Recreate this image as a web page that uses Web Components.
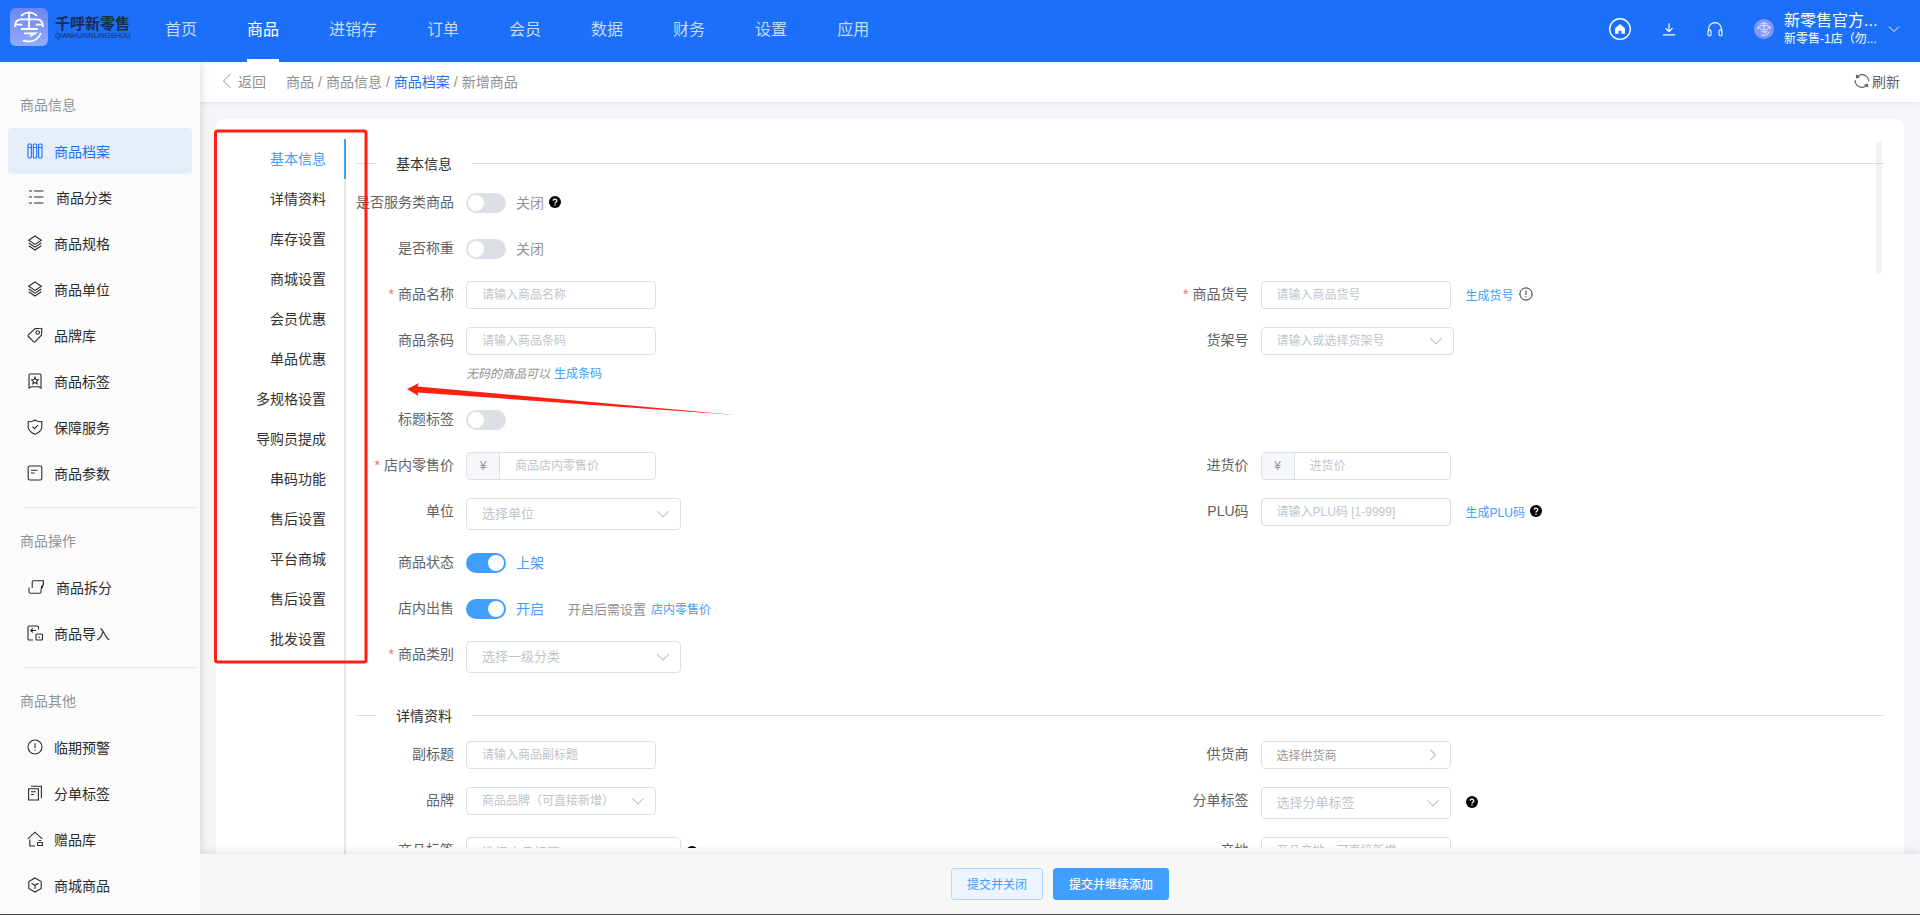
<!DOCTYPE html>
<html lang="zh-CN">
<head>
<meta charset="utf-8">
<title>新增商品</title>
<style>
  html, body { margin: 0; height: 100%; }
  body {
    font-family: "Liberation Sans", "Noto Sans CJK SC", sans-serif;
    font-size: 14px;
    color: #303133;
    background: #f4f6f9;
    overflow: hidden;
  }
</style>
</head>
<body>
<product-app></product-app>

<script>
const define = (name, html, setup) => {
  const tpl = document.createElement('template');
  tpl.innerHTML = html;
  customElements.define(name, class extends HTMLElement {
    connectedCallback() {
      if (this.shadowRoot) return;
      this.attachShadow({ mode: 'open' }).appendChild(tpl.content.cloneNode(true));
      if (setup) setup.call(this, this.shadowRoot);
    }
  });
};

const ICONS = {
  columns: '<rect x="1" y="1" width="3.4" height="14" rx="1"/><rect x="6.3" y="1" width="3.4" height="14" rx="1"/><rect x="11.6" y="1" width="3.4" height="14" rx="1"/><path d="M1 4.5h3.4M6.3 4.5h3.4M11.6 4.5H15"/>',
  list: '<path d="M1 2h3M6 2h9.5M1 8h3M6 8h9.5M1 14h3M6 14h9.5" stroke-width="1.2"/>',
  layers: '<path d="M8 1l6.3 4.2L8 9.4 1.700 5.200z"/><path d="M1.700 8L8 12.200 14.300 8M1.700 10.800L8 15l6.300-4.200"/>',
  tag: '<path d="M8.200 1.600l5.600-.4a1 1 0 0 1 1.100 1.100l-.5 5.900L8.200 14.600a1.200 1.200 0 0 1-1.700 0L1.400 9.500a1.200 1.200 0 0 1 0-1.700z"/><circle cx="10.700" cy="5.500" r="1.800"/>',
  bookmark: '<path d="M2 15V2.200A1.200 1.200 0 0 1 3.200 1h9.600A1.200 1.200 0 0 1 14 2.200V15l-2.200-1.200H4.200z"/><path d="M8 4.300l1 2.200 2.400.3-1.800 1.600.5 2.400L8 9.600l-2.100 1.200.5-2.400-1.800-1.600L7 6.500z"/>',
  shield: '<path d="M8 1l2.300 1.300 4.500.5v5.400c0 3-2.600 5.200-6.800 7-4.200-1.800-6.800-4-6.800-7V2.800l4.500-.5z"/><path d="M5.500 7.600l2 2 3.400-3.400"/>',
  params: '<rect x="1.200" y="1" width="13.600" height="14" rx="1.500"/><path d="M4 5.200h6.500M4 8h3.500"/>',
  split: '<path d="M4.200 9V3.200A1.500 1.500 0 0 1 5.700 1.700H15.400V6M13.600 6.600l-.6 6.200a1.500 1.500 0 0 1-1.500 1.500H2.500A1.500 1.500 0 0 1 1 12.800V8.500M4.200 5v3M15.400 4l-1.200 5"/>',
  importer: '<path d="M11.500 4.500V2.200A1.200 1.200 0 0 0 10.300 1H2.200A1.200 1.200 0 0 0 1 2.200v11.600A1.200 1.200 0 0 0 2.200 15H6"/><path d="M9 5.500H3.800M5.800 3.500l-2 2 2 2"/><rect x="9" y="9" width="6.500" height="6" rx="1"/><path d="M11.500 12.200h1.600"/>',
  alert: '<circle cx="8" cy="8" r="7"/><path d="M8 4.200v4.800M8 10.500v1.300"/>',
  copies: '<path d="M1.600 3.800h9.800V15H1.600zM4 1.200h10.400v12M4 6.800h4.800M4 9.500h2.800"/>',
  gift: '<path d="M2.800 8.500V15H8M.8 7.800L8 1.200l7.200 6.600"/><path d="M10.500 11.500h5M10.500 14.500h5V11.500M10.500 11.500v3M11.700 9.500h2.600"/>',
  cube: '<path d="M8 1l6.200 3.500v7L8 15l-6.200-3.500v-7z"/><path d="M4.500 6.300L8 8.300l3.500-2M8 8.300v3.700"/>',
  home: '<circle cx="8" cy="8" r="7.500" stroke-width="1"/><path d="M8 4.400L11.600 7.500V11.500H9.100V9.200H6.900V11.500H4.400V7.500z" fill="currentColor" stroke="none"/>',
  download: '<path d="M8 1.500v9M4 7l4 4 4-4M1 14.800h14" stroke-width="1.400"/>',
  headset: '<path d="M1.600 10.500V8a6.400 6.400 0 0 1 12.800 0v2.500"/><rect x="1" y="8.800" width="3" height="6" rx="1.400"/><rect x="12" y="8.800" width="3" height="6" rx="1.400"/>',
  down: '<path d="M1.500 4.800L8 11.300l6.500-6.500" stroke-width="1.300"/>',
  left: '<path d="M12 0L4 8 12 16"/>',
  right: '<path d="M5 2l6 6-6 6" stroke-width="1.300"/>',
  refresh: '<path d="M4.800 2.400A6.800 6.800 0 0 1 14.700 8.600M1.300 7.400A6.800 6.800 0 0 0 11.200 13.600"/><path d="M1.800 1.200L2.200 5.600 6.300 4.200zM14.200 14.800l-.4-4.400-4.100 1.400z" fill="currentColor" stroke="none"/><path d="M4.800 2.400L3 4.200M1.300 7.400V9.400M11.200 13.600L13 11.800" />',
  help: '<circle cx="8" cy="8" r="8" fill="#000" stroke="none"/><path d="M5.700 6.400a2.300 2.100 0 1 1 3.700 1.600c-.9.700-1.400.9-1.400 1.900M8 11.300v1.600" stroke="#fff" stroke-width="1.800"/>',
  brand: '<path d="M4 2.400Q8 -1 12 2.400M1 8Q1 4.200 4 4.200h8q3 0 3 3.800M8 .8v8M1 6.800h3.600M11.400 6.800H15M4 9h8.500M5.500 11.200h5.500L8.500 12.600M14 11q-2.500 5.600-9 3.800" stroke="#fff" stroke-width=".9"/>'
};

class UiIcon extends HTMLElement {
  connectedCallback() {
    if (this.shadowRoot) return;
    this.attachShadow({ mode: 'open' }).innerHTML = `
      <style>
        :host { display: inline-block; width: 14px; height: 14px; flex: none; }
        svg { display: block; width: 100%; height: 100%; overflow: visible; }
      </style>
      <svg viewBox="0 0 16 16" fill="none" stroke="currentColor" stroke-width="1.1" aria-hidden="true">${ICONS[this.getAttribute('name')]}</svg>`;
  }
}
customElements.define('ui-icon', UiIcon);

/* ---------- Top bar ---------- */
define('app-header', `
  <style>
    :host { display: flex; align-items: stretch; height: 62px; box-sizing: border-box;
      padding: 0 20px 0 10px; background: #1b6ff8; color: #fff; }
    .logo { display: flex; align-items: center; gap: 7px; padding-bottom: 8px; }
    .mark { width: 38px; height: 38px; border-radius: 6px; display: grid; place-items: center;
      background: linear-gradient(#6c86f4, #93abfc); }
    .mark ui-icon { width: 32px; height: 32px; }
    .words { display: grid; color: #1d2b52; width: 76px; }
    .words b { font-size: 15px; line-height: 17px; }
    .words span { font-size: 7px; line-height: 8px; }
    nav { display: flex; flex: 1; margin-left: 9px; }
    nav a { display: flex; align-items: center; margin: 0 25px; padding-bottom: 4px; box-sizing: border-box;
      border-bottom: 3px solid transparent; font-size: 16px; color: #c6dbfd; text-decoration: none;
      padding-top: 1px; }
    nav a.on { color: #fff; border-color: #fff; }
    .tools { display: flex; align-items: center; gap: 31px; padding-bottom: 4px; }
    button { display: grid; padding: 0; border: 0; background: none; color: inherit; }
    .home { width: 22px; height: 22px; }
    .headset { width: 16px; height: 16px; }
    .account { display: flex; align-items: center; gap: 10px; }
    .face { width: 20px; height: 20px; border-radius: 50%; background: #8298f7; display: grid; place-items: center; }
    .who { display: grid; width: 94px; white-space: nowrap; }
    .who strong { font-weight: 400; font-size: 16px; line-height: 20px; }
    .who small { font-size: 12px; line-height: 16px; }
    .caret { width: 12px; height: 12px; }
  </style>
  <div class="logo"><span class="mark"><ui-icon name="brand"></ui-icon></span>
    <div class="words"><b>千呼新零售</b><span>QIANHUXINLINGSHOU</span></div></div>
  <nav><a href="#">首页</a><a href="#" class="on">商品</a><a href="#">进销存</a><a href="#">订单</a><a href="#">会员</a><a href="#">数据</a><a href="#">财务</a><a href="#">设置</a><a href="#">应用</a></nav>
  <div class="tools">
    <button aria-label="主页"><ui-icon class="home" name="home"></ui-icon></button>
    <button aria-label="下载"><ui-icon name="download"></ui-icon></button>
    <button aria-label="客服"><ui-icon class="headset" name="headset"></ui-icon></button>
    <div class="account">
      <span class="face"><ui-icon name="brand"></ui-icon></span>
      <div class="who"><strong>新零售官方...</strong><small>新零售-1店（勿...</small></div>
      <ui-icon class="caret" name="down"></ui-icon>
    </div>
  </div>`);

/* ---------- Sidebar ---------- */
define('menu-group', `
  <style>
    :host { display: block; padding: 0 8px; }
    h2 { margin: 0 0 0 12px; font-size: 14px; font-weight: 400; line-height: 20px; color: #8f9299; padding-bottom: 13px; }
    hr { margin: 11px -4px 23px 16px; border: 0; height: 1px; background: #e4e5e7; }
  </style>
  <h2></h2><slot></slot><hr>`, function (root) {
  root.querySelector('h2').textContent = this.getAttribute('heading');
  if (this.hasAttribute('last')) root.querySelector('hr').remove();
});

define('menu-item', `
  <style>
    :host { display: block; }
    a { display: flex; align-items: center; gap: 11px; height: 46px; padding-left: 19px;
      border-radius: 4px; color: #2b2b2b; text-decoration: none; }
    ui-icon { width: 16px; height: 16px; }
    :host([wide]) ui-icon { width: 18px; }
    :host([active]) a { background: #e6edfb; color: #1b6ff8; }
  </style>
  <a href="#"><ui-icon></ui-icon><slot></slot></a>`, function (root) {
  const icon = document.createElement('ui-icon');
  icon.setAttribute('name', this.getAttribute('icon'));
  root.querySelector('ui-icon').replaceWith(icon);
});

define('side-menu', `
  <style>
    :host { display: block; width: 200px; box-sizing: border-box; flex: none; padding-top: 33px; overflow: hidden;
      background: #fbfbfb; }
  </style>
  <menu-group heading="商品信息">
    <menu-item icon="columns" active>商品档案</menu-item>
    <menu-item icon="list" wide>商品分类</menu-item>
    <menu-item icon="layers">商品规格</menu-item>
    <menu-item icon="layers">商品单位</menu-item>
    <menu-item icon="tag">品牌库</menu-item>
    <menu-item icon="bookmark">商品标签</menu-item>
    <menu-item icon="shield">保障服务</menu-item>
    <menu-item icon="params">商品参数</menu-item>
  </menu-group>
  <menu-group heading="商品操作">
    <menu-item icon="split" wide>商品拆分</menu-item>
    <menu-item icon="importer">商品导入</menu-item>
  </menu-group>
  <menu-group heading="商品其他" last>
    <menu-item icon="alert">临期预警</menu-item>
    <menu-item icon="copies">分单标签</menu-item>
    <menu-item icon="gift">赠品库</menu-item>
    <menu-item icon="cube">商城商品</menu-item>
  </menu-group>`);

/* ---------- Breadcrumb ---------- */
define('crumb-bar', `
  <style>
    :host { display: flex; align-items: center; height: 40px; box-sizing: border-box; padding: 0 20px 2px 20px; flex: none;
      background: #fff; color: #909090; box-shadow: 0 1px 4px rgba(0, 21, 41, .08); }
    a { color: inherit; text-decoration: none; }
    .back { display: flex; align-items: center; gap: 4px; margin-right: 20px; }
    ol { display: flex; flex: 1; margin: 0; padding: 0; list-style: none; }
    li + li::before { content: "/"; margin: 0 4px; }
    .on { color: #1b6ff8; }
    button { display: flex; align-items: center; gap: 2px; padding: 0; border: 0; background: none;
      font: inherit; color: #606266; }
    button ui-icon { width: 16px; height: 16px; }
  </style>
  <a class="back" href="#"><ui-icon name="left"></ui-icon>返回</a>
  <ol><li><a href="#">商品</a></li><li><a href="#">商品信息</a></li><li><a href="#" class="on">商品档案</a></li><li>新增商品</li></ol>
  <button><ui-icon name="refresh"></ui-icon>刷新</button>`);

/* ---------- Section tabs ---------- */
define('section-tabs', `
  <style>
    :host { display: block; width: 130px; flex: none; box-sizing: border-box; border-right: 2px solid #e4e7ed; }
    a { display: block; height: 40px; line-height: 40px; padding-right: 18px; margin-right: -2px;
      border-right: 2px solid transparent; text-align: right; color: #303133; text-decoration: none; }
    a.on { color: #409eff; border-color: #409eff; }
  </style>
  <nav></nav>`, function (root) {
  root.querySelector('nav').innerHTML = ['基本信息', '详情资料', '库存设置', '商城设置', '会员优惠', '单品优惠',
    '多规格设置', '导购员提成', '串码功能', '售后设置', '平台商城', '售后设置', '批发设置']
    .map((t, i) => `<a href="#"${i ? '' : ' class="on"'}>${t}</a>`).join('');
});

/* ---------- Form ---------- */
define('form-section', `
  <style>
    :host { display: block; }
    h3 { display: flex; align-items: center; gap: 20px; height: 21px; margin: 0 0 15px; font-size: 14px; font-weight: 400;
      white-space: nowrap; }
    h3::before, h3::after { content: ""; height: 1px; background: #dcdfe6; width: 20px; }
    h3::after { flex: 1; }
    h3 span { padding-bottom: 2px; }
    .rows { display: grid; grid-template-columns: 52fr 48fr; row-gap: 18px; }
  </style>
  <h3><span></span></h3><div class="rows"><slot></slot></div>`, function (root) {
  root.querySelector('h3 span').textContent = this.getAttribute('heading');
});

/* kind: input | select | switch | picker */
const FIELD_STYLE = `
  :host { display: flex; grid-column: 1; min-width: 0; }
  :host([right]) { grid-column: 2; }
  .label { width: 98px; padding-right: 12px; flex: none; text-align: right; line-height: 26px; color: #606266; white-space: nowrap; }
  :host([required]) .label::before { content: "*"; color: #f56c6c; margin-right: 4px; }
  .body { flex: 1; }
  .line { display: flex; align-items: center; min-height: 28px; }
  .box { display: flex; position: relative; width: 190px; height: 28px; box-sizing: border-box;
    border: 1px solid #dcdfe6; border-radius: 4px; background: #fff; color: #c0c4cc; }
  :host([size="shelf"]) .box { width: 193px; }
  :host([size="wide"]) .box { width: 215px; }
  :host([tall]) .box { height: 32px; }
  .pre { width: 32px; border-right: 1px solid #dcdfe6; border-radius: 3px 0 0 3px; background: #f5f7fa; color: #909399;
    font-size: 12px; line-height: 26px; text-align: center; flex: none; }
  input.text, select, .pick { appearance: none; flex: 1; min-width: 0; width: 100%; margin: 0; padding: 0 15px; border: 0; border-radius: 4px;
    background: transparent; font: inherit; font-size: 12px; color: #c0c4cc; outline: 0; text-align: left; }
  :host([tall]) select { font-size: 13px; padding-bottom: 2px; }
  input.text::placeholder { color: #c0c4cc; opacity: 1; }
  .pick { color: #999; padding-bottom: 2px; }
  .arrow { position: absolute; right: 10px; top: 0; bottom: 0; margin: auto; width: 14px; height: 14px; pointer-events: none; }
  input.sw { appearance: none; width: 40px; height: 20px; margin: 0; border-radius: 10px; background: #dcdfe6; }
  input.sw::before { content: ""; display: block; width: 16px; height: 16px; margin: 2px; border-radius: 50%; background: #fff; }
  input.sw:checked { background: #409eff; }
  input.sw:checked::before { margin-left: 22px; }
  .state { margin-left: 10px; padding-bottom: 2px; color: #909399; }
  input.sw:checked + .state { color: #409eff; }
`;
customElements.define('form-field', class extends HTMLElement {
  connectedCallback() {
    if (this.shadowRoot) return;
    const get = n => this.getAttribute(n) || '';
    const hint = get('hint');
    const kinds = {
      input: () => `<span class="box">${this.hasAttribute('money') ? '<span class="pre">¥</span>' : ''}<input class="text" id="c" placeholder="${hint}"></span>`,
      select: () => `<span class="box"><select id="c"><option>${hint}</option></select><ui-icon class="arrow" name="down"></ui-icon></span>`,
      picker: () => `<span class="box"><button class="pick" id="c">${hint}</button><ui-icon class="arrow" name="right"></ui-icon></span>`,
      switch: () => `<input class="sw" id="c" type="checkbox" role="switch"${this.hasAttribute('on') ? ' checked' : ''}>${get('state') ? `<span class="state">${get('state')}</span>` : ''}`
    };
    this.attachShadow({ mode: 'open' }).innerHTML = `<style>${FIELD_STYLE}</style>
      <label class="label" for="c">${get('label')}</label>
      <div class="body"><div class="line">${kinds[get('kind')]()}<slot></slot></div><slot name="below"></slot></div>`;
  }
});

define('field-note', `
  <style>
    :host { display: flex; align-items: center; gap: 5px; margin-left: 15px; padding-bottom: 2px; font-size: 12px; color: #909399; }
    :host([tight]) { margin-left: 5px; }
    :host([slot="below"]) { margin-left: 0; height: 33px; box-sizing: border-box; padding: 1px 0 0; gap: 4px; }
    :host([far]) { margin-left: 24px; }
    a { color: #409eff; text-decoration: none; }
    em, span { color: #909090; }
    span { font-size: 13px; }
    ui-icon { width: 12px; height: 12px; color: #222; }
    ui-icon[name="alert"] { width: 14px; height: 14px; }
  </style>`, function (root) {
  const get = n => this.getAttribute(n);
  const add = html => root.append(document.createRange().createContextualFragment(html));
  if (get('em')) add(`<em>${get('em')}</em>`);
  if (get('text')) add(`<span>${get('text')}</span>`);
  if (get('link')) add(`<a href="#">${get('link')}</a>`);
  if (get('icon')) add(`<ui-icon name="${get('icon')}"></ui-icon>`);
});

define('product-form', `
  <style>
    :host { display: block; flex: 1; min-width: 0; position: relative; margin: 0 20px 6px 10px; }
    .scroll { height: 100%; overflow-y: auto; scrollbar-width: none; box-sizing: border-box; padding-top: 14px; }
    form-section + form-section { margin-top: 32px; }
    .gap { min-height: 33px; }
    .thumb { position: absolute; top: 2px; right: 2px; width: 6px; height: 133px; border-radius: 3px; background: rgba(144, 160, 153, .13); }
  </style>
  <div class="scroll">
    <form-section heading="基本信息">
      <form-field kind="switch" label="是否服务类商品" state="关闭"><field-note tight icon="help"></field-note></form-field>
      <form-field kind="switch" label="是否称重" state="关闭"></form-field>
      <form-field kind="input" label="商品名称" hint="请输入商品名称" required></form-field>
      <form-field right kind="input" label="商品货号" hint="请输入商品货号" required><field-note link="生成货号" icon="alert"></field-note></form-field>
      <form-field kind="input" label="商品条码" hint="请输入商品条码"><field-note slot="below" em="无码的商品可以" link="生成条码"></field-note></form-field>
      <form-field right kind="select" size="shelf" label="货架号" hint="请输入或选择货架号"></form-field>
      <form-field kind="switch" label="标题标签"></form-field>
      <form-field kind="input" money label="店内零售价" hint="商品店内零售价" required></form-field>
      <form-field right kind="input" money label="进货价" hint="进货价"></form-field>
      <form-field class="gap" kind="select" size="wide" tall label="单位" hint="选择单位"></form-field>
      <form-field right kind="input" label="PLU码" hint="请输入PLU码 [1-9999]"><field-note link="生成PLU码" icon="help"></field-note></form-field>
      <form-field kind="switch" on label="商品状态" state="上架"></form-field>
      <form-field kind="switch" on label="店内出售" state="开启"><field-note far text="开启后需设置" link="店内零售价"></field-note></form-field>
      <form-field kind="select" size="wide" tall label="商品类别" hint="选择一级分类" required></form-field>
    </form-section>
    <form-section heading="详情资料">
      <form-field kind="input" label="副标题" hint="请输入商品副标题"></form-field>
      <form-field right kind="picker" label="供货商" hint="选择供货商"></form-field>
      <form-field kind="select" label="品牌" hint="商品品牌（可直接新增）"></form-field>
      <form-field right kind="select" tall label="分单标签" hint="选择分单标签"><field-note icon="help"></field-note></form-field>
      <form-field kind="select" size="wide" tall label="商品标签" hint="选择商品标签"><field-note tight icon="help"></field-note></form-field>
      <form-field right kind="input" label="产地" hint="商品产地，可直接新增"></form-field>
    </form-section>
  </div>
  <div class="thumb"></div>`);

/* ---------- Footer actions ---------- */
define('action-bar', `
  <style>
    :host { display: flex; justify-content: center; align-items: center; gap: 10px; height: 60px; flex: none;
      position: relative; z-index: 2; background: #f7f7f7; box-shadow: 0 -2px 8px rgba(0, 0, 0, .1); }
    button { height: 32px; padding: 0 15px 2px; border: 1px solid #b3d8ff; border-radius: 3px; background: #ecf5ff;
      color: #409eff; font: inherit; font-size: 12px; }
    .main { border-color: #409eff; background: #409eff; color: #fff; font-weight: 500; }
  </style>
  <button>提交并关闭</button><button class="main">提交并继续添加</button>`);

/* ---------- Guide annotation floating over the page ---------- */
define('guide-mark', `
  <style>
    :host { position: absolute; left: -2px; top: 10px; width: 524px; height: 536px; pointer-events: none; z-index: 1; }
    svg { display: block; width: 100%; height: 100%; }
  </style>
  <svg viewBox="0 0 524 536" fill="none" aria-hidden="true">
    <rect x="1.500" y="2" width="150.500" height="531" rx="2" stroke="#ff2012" stroke-width="3"/>
    <path d="M193 260L205 254 203.500 257.500 522 286 203.500 263.500 204.500 267z" fill="#ff2012"/>
  </svg>`);

define('product-app', `
  <style>
    :host { display: flex; flex-direction: column; height: 100vh; box-sizing: border-box; border-bottom: 1px solid #4a4a4a; }
    .body { display: flex; flex: 1; min-height: 0; }
    side-menu { box-shadow: 0 0 10px rgba(0, 0, 0, .16); }
    app-header { position: relative; z-index: 3; }
    main { display: flex; flex-direction: column; flex: 1; min-width: 0; }
    side-menu { position: relative; z-index: 1; }
    action-bar { clip-path: inset(-10px 0 0 0); }
    .panel { display: flex; flex: 1; min-height: 0; position: relative; margin: 17px 16px 0; padding-top: 20px; border-radius: 8px 8px 0 0; background: #fff; }
  </style>
  <app-header></app-header>
  <div class="body">
    <side-menu></side-menu>
    <main>
      <crumb-bar></crumb-bar>
      <section class="panel">
        <section-tabs></section-tabs>
        <product-form></product-form>
        <guide-mark></guide-mark>
      </section>
      <action-bar></action-bar>
    </main>
  </div>`);
</script>
</body>
</html>
